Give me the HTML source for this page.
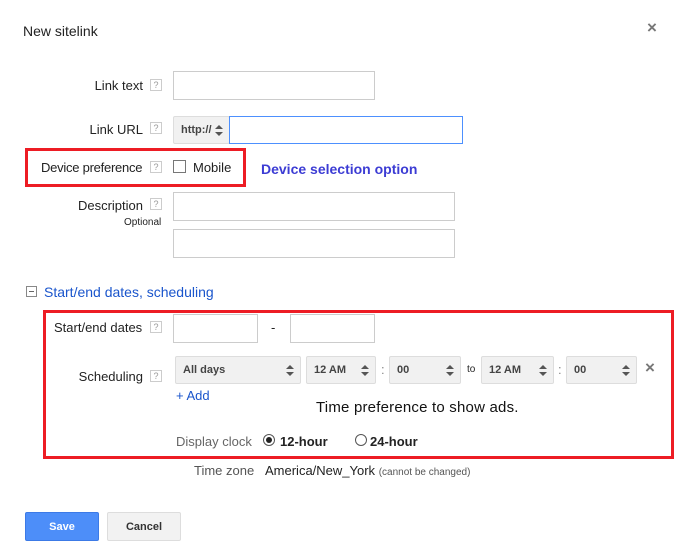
<!DOCTYPE html>
<html><head><meta charset="utf-8"><style>
*{box-sizing:border-box;margin:0;padding:0}
body{width:683px;height:548px;background:#fff;position:relative;font-family:"Liberation Sans",Arial,sans-serif;font-size:13px;color:#222;overflow:hidden}
.a{position:absolute;white-space:nowrap}
.lbl{position:absolute;white-space:nowrap;text-align:right;width:143px;left:0}
.q{position:absolute;width:12px;height:12px;border:1px solid #ccc;color:#999;font-size:9px;line-height:10px;text-align:center}
.in{position:absolute;border:1px solid #ccc;background:#fff}
.sel{position:absolute;height:28px;border:1px solid #ddd;background:#f1f1f1;border-radius:2px;font-weight:bold;font-size:11px;color:#444;line-height:26px;padding-left:7px}
.sel:after{content:"";position:absolute;right:6px;top:8px;border:4px solid transparent;border-bottom:4px solid #555;border-top:none}
.sel:before{content:"";position:absolute;right:6px;top:15px;border:4px solid transparent;border-top:4px solid #555;border-bottom:none}
.red{position:absolute;border:3px solid #ed1c24}
</style></head><body>
<div class="a" style="left:23px;top:23px;font-size:14px">New sitelink</div>
<div class="a" style="left:647px;top:18px;font-size:17px;color:#777;font-weight:bold">×</div>

<div class="lbl" style="top:78px">Link text</div>
<div class="q" style="left:150px;top:79px">?</div>
<div class="in" style="left:173px;top:71px;width:202px;height:29px"></div>

<div class="lbl" style="top:122px">Link URL</div>
<div class="q" style="left:150px;top:122px">?</div>
<div class="sel" style="left:173px;top:116px;width:57px;height:28px;font-size:11px">http://</div>
<div class="in" style="left:229px;top:116px;width:234px;height:28px;border-color:#4d90fe"></div>

<div class="red" style="left:25px;top:148px;width:221px;height:39px"></div>
<div class="a" style="left:41px;top:160px;letter-spacing:-0.25px">Device preference</div>
<div class="q" style="left:150px;top:161px">?</div>
<div class="a" style="left:173px;top:160px;width:13px;height:13px;border:1px solid #777"></div>
<div class="a" style="left:193px;top:160px">Mobile</div>
<div class="a" style="left:261px;top:161px;font-size:14px;font-weight:bold;color:#3c3cd4">Device selection option</div>

<div class="lbl" style="top:198px">Description</div>
<div class="q" style="left:150px;top:198px">?</div>
<div class="a" style="left:124px;top:217px;font-size:10px">Optional</div>
<div class="in" style="left:173px;top:192px;width:282px;height:29px"></div>
<div class="in" style="left:173px;top:229px;width:282px;height:29px"></div>

<div class="a" style="left:26px;top:286px;width:11px;height:11px;border:1px solid #888"><div style="position:absolute;left:2px;top:4px;width:5px;height:1px;background:#666"></div></div>
<div class="a" style="left:44px;top:284px;font-size:14px;color:#1a55cc">Start/end dates, scheduling</div>

<div class="red" style="left:43px;top:310px;width:631px;height:149px"></div>
<div class="a" style="left:54px;top:320px">Start/end dates</div>
<div class="q" style="left:150px;top:321px">?</div>
<div class="in" style="left:173px;top:314px;width:85px;height:29px"></div>
<div class="a" style="left:271px;top:320px">-</div>
<div class="in" style="left:290px;top:314px;width:85px;height:29px"></div>

<div class="lbl" style="top:369px">Scheduling</div>
<div class="q" style="left:150px;top:370px">?</div>
<div class="sel" style="left:175px;top:356px;width:126px">All days</div>
<div class="sel" style="left:306px;top:356px;width:70px">12 AM</div>
<div class="a" style="left:381px;top:362px;color:#888">:</div>
<div class="sel" style="left:389px;top:356px;width:72px">00</div>
<div class="a" style="left:467px;top:364px;font-size:10px">to</div>
<div class="sel" style="left:481px;top:356px;width:73px">12 AM</div>
<div class="a" style="left:558px;top:362px;color:#888">:</div>
<div class="sel" style="left:566px;top:356px;width:71px">00</div>
<div class="a" style="left:645px;top:358px;font-size:17px;color:#777;font-weight:bold">×</div>
<div class="a" style="left:176px;top:388px;color:#1a55cc">+ Add</div>
<div class="a" style="left:316px;top:399px;font-size:15px;color:#111;letter-spacing:0.2px">Time preference to show ads.</div>

<div class="a" style="left:176px;top:434px;color:#666">Display clock</div>
<div class="a" style="left:263px;top:434px;width:12px;height:12px;border:1px solid #555;border-radius:50%"><div style="position:absolute;left:2px;top:2px;width:6px;height:6px;background:#222;border-radius:50%"></div></div>
<div class="a" style="left:280px;top:434px;font-weight:bold">12-hour</div>
<div class="a" style="left:355px;top:434px;width:12px;height:12px;border:1px solid #555;border-radius:50%"></div>
<div class="a" style="left:370px;top:434px;font-weight:bold">24-hour</div>

<div class="a" style="left:194px;top:463px;color:#555">Time zone</div>
<div class="a" style="left:265px;top:463px">America/New_York <span style="font-size:10px;color:#555">(cannot be changed)</span></div>

<div class="a" style="left:25px;top:512px;width:74px;height:29px;background:#4d8ef9;border:1px solid #3c7ae6;border-radius:2px;color:#fff;font-weight:bold;font-size:11px;text-align:center;line-height:28px">Save</div>
<div class="a" style="left:107px;top:512px;width:74px;height:29px;background:#f2f2f2;border:1px solid #ddd;border-radius:2px;color:#333;font-weight:bold;font-size:11px;text-align:center;line-height:28px">Cancel</div>
</body></html>
